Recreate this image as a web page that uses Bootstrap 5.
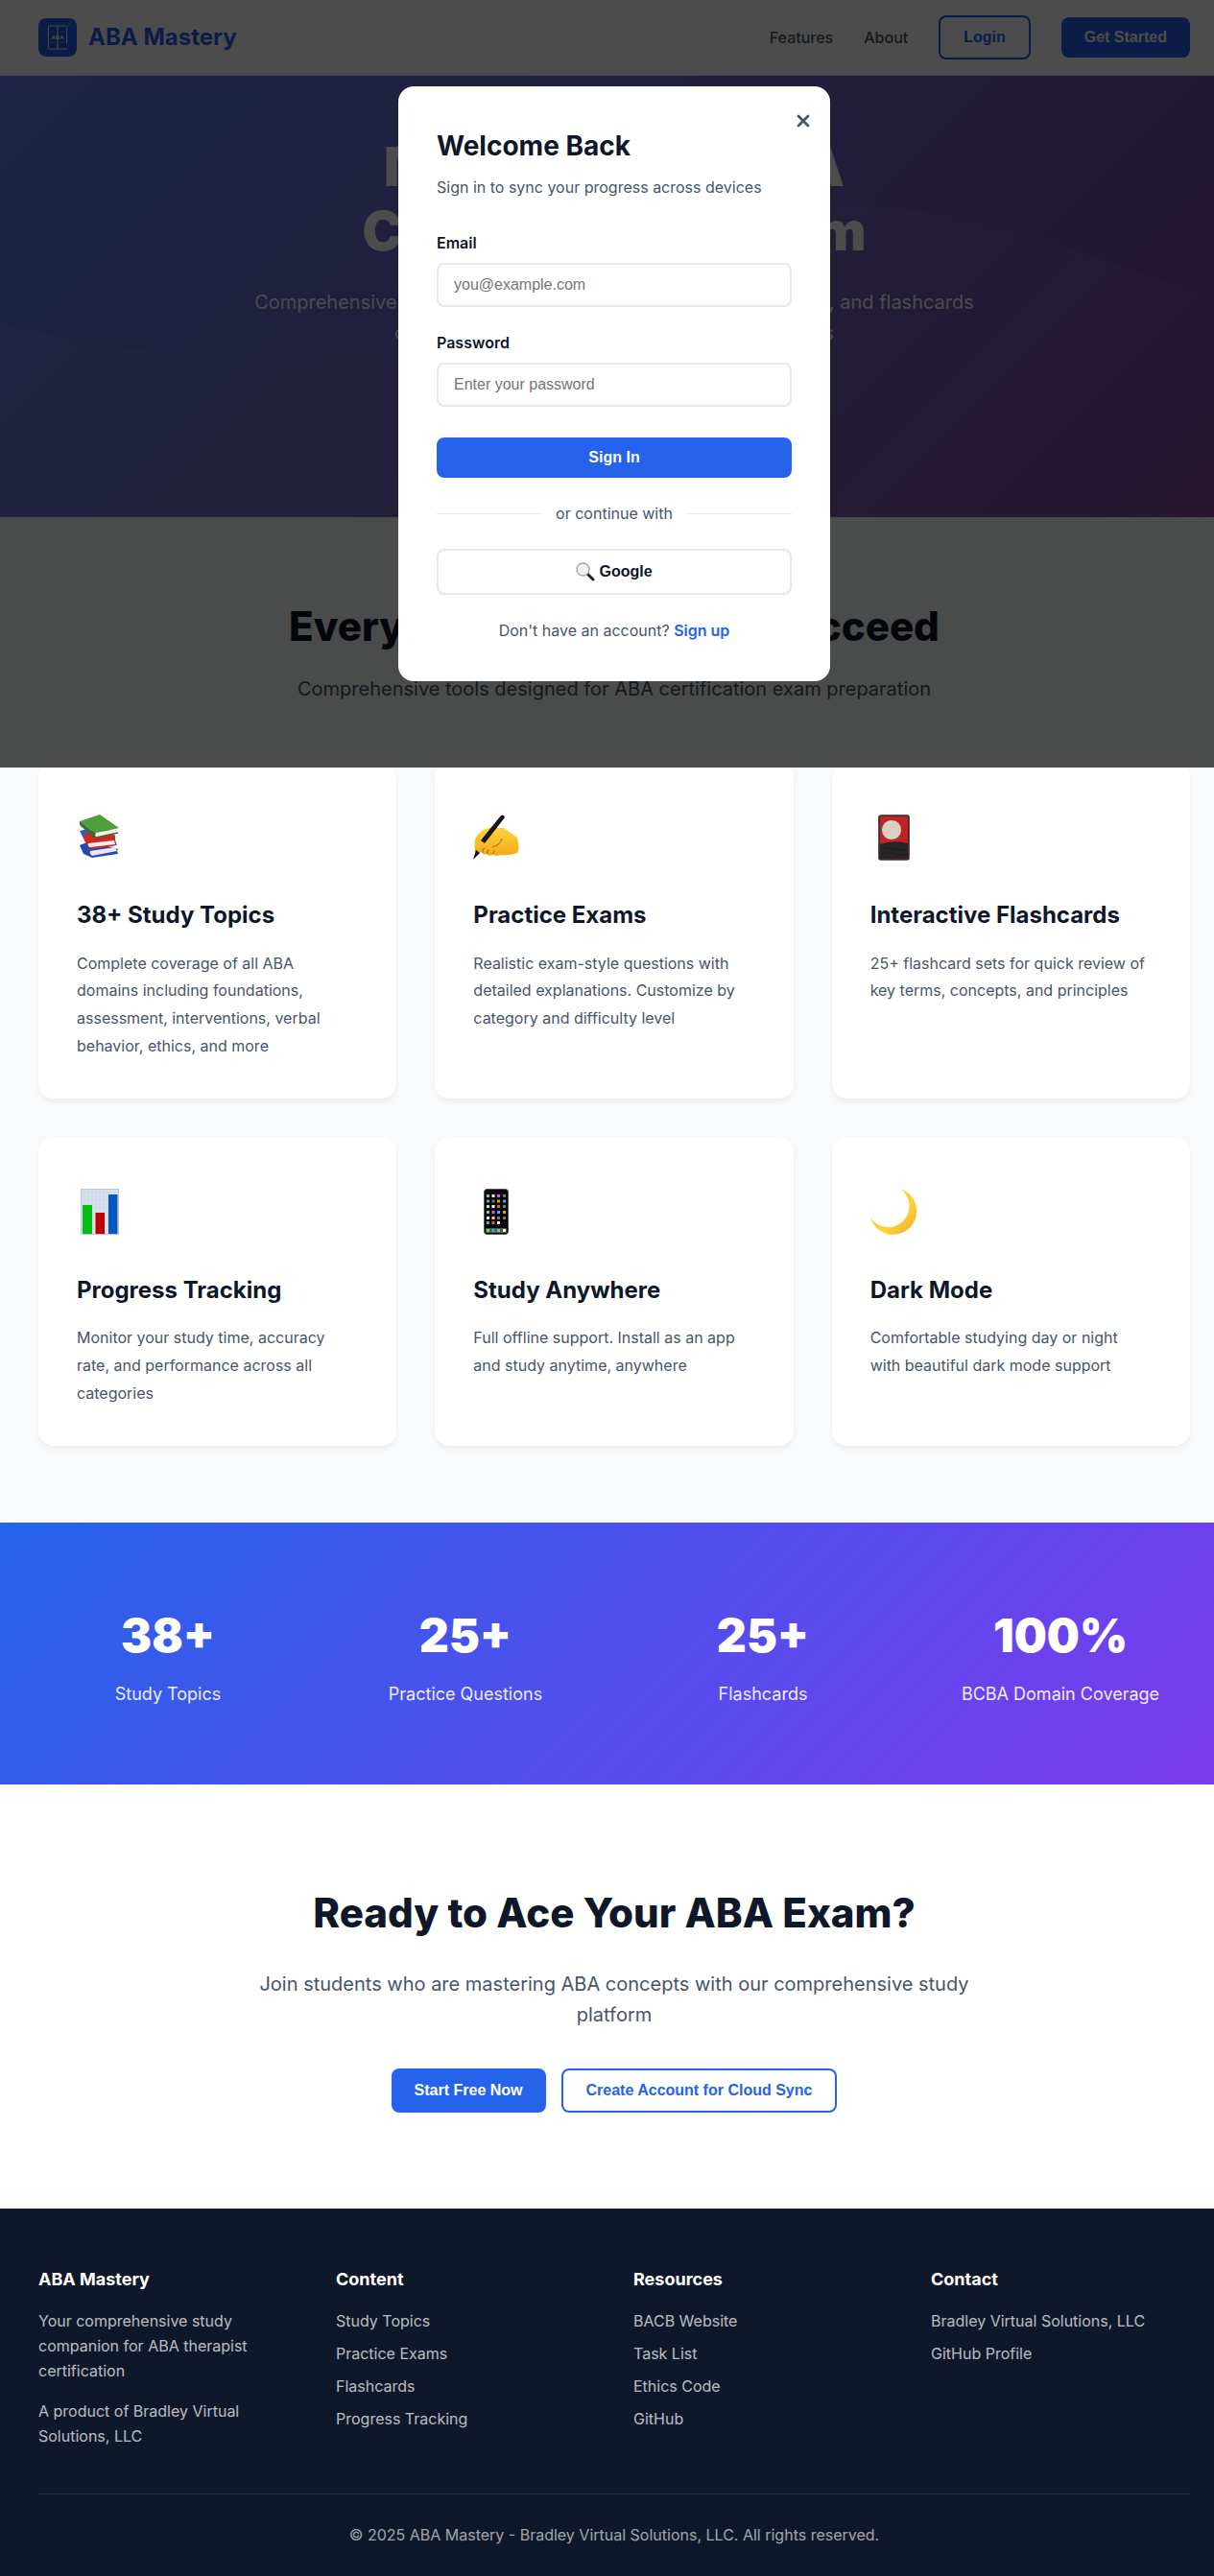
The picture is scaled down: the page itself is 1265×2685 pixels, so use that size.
<!DOCTYPE html>
<html lang="en">
<head>
<meta charset="utf-8">
<meta name="viewport" content="width=device-width, initial-scale=1">
<title>ABA Mastery</title>
<link href="https://cdn.jsdelivr.net/npm/bootstrap@5.3.0/dist/css/bootstrap.min.css" rel="stylesheet">
<style>
:root { --brand: #2563eb; --ink: #0f172a; --slate: #475569; --line: #e2e8f0; }
html { overflow-x: hidden; }
/* the page runs on under the scrollbar gutter */
body { margin-right: -15px; position: relative; font-family: Inter, "Liberation Sans", sans-serif; font-size: 16px; line-height: 26px; color: var(--ink); background: #fff; }
h1, h2, h3, h4, p, ul { margin: 0; }
a { text-decoration: none; }
.shell { max-width: 1280px; margin: 0 auto; padding: 0 40px; }
.narrow { max-width: 800px; }
.slate { color: var(--slate); }
.intro { font-size: 20px; line-height: 32px; }

.btn { font-family: "Liberation Sans", Arial, sans-serif; font-size: 16px; font-weight: 600; line-height: 18px; padding: 12px 24px; border: 0; border-radius: 8px; }
.btn-brand, .btn-brand:hover { background: var(--brand); color: #fff; }
.btn-line, .btn-line:hover { background: #fff; color: var(--brand); border: 2px solid var(--brand); }
.btn-plain, .btn-plain:hover { background: #fff; color: var(--ink); border: 2px solid var(--line); line-height: 20px; }

.site-head { border-bottom: 1px solid var(--line); background: #fff; }
.brand-name { font-size: 24px; font-weight: 700; color: var(--brand); }
.site-head nav a { color: var(--slate); font-weight: 500; }
.logo { width: 40px; height: 40px; }

.hero { position: relative; min-height: 460px; padding: 62px 0; color: #fff; background: linear-gradient(135deg, #667eea 0%, #764ba2 94%, #8b3f9c 100%); }
.hero .wave { position: absolute; left: 0; bottom: 0; width: 100%; height: 340px; }
.hero .narrow { position: relative; }
.hero h1 { font-size: 56px; font-weight: 900; line-height: 1.2; margin-bottom: 24px; }
.hero p { opacity: .95; }

.features { background: #f8fafc; padding: 80px 0; }
.title { font-size: 42px; font-weight: 800; line-height: 1.6; }
.tile { background: #fff; border-radius: 16px; padding: 40px; height: 100%; box-shadow: 0 4px 6px rgba(0, 0, 0, .05); }
.tile .pic { height: 77px; margin-bottom: 24px; }
.tile svg { width: 48px; height: 48px; }
.tile h3 { font-size: 24px; font-weight: 700; line-height: 1.6; margin-bottom: 16px; }
.tile p { line-height: 1.8; color: var(--slate); }
.wide-gap { --bs-gutter-x: 40px; --bs-gutter-y: 40px; }

.stats { background: linear-gradient(135deg, #2563eb, #7c3aed); color: #fff; padding: 80px 0; }
.stats .num { font-size: 48px; font-weight: 900; line-height: 1.6; margin-bottom: 8px; }
.stats .cap { font-size: 18px; line-height: 29px; opacity: .9; }

.cta { padding: 100px 0; }
.site-foot { background: #0f172a; color: #fff; padding: 60px 0 30px; }
.site-foot h4 { font-size: 18px; font-weight: 700; line-height: 28px; margin-bottom: 16px; }
.site-foot .dim, .site-foot a { color: #fff; opacity: .7; }
.site-foot li { margin-bottom: 8px; }
.legal { border-top: 1px solid rgba(255, 255, 255, .1); margin-top: 47px; padding-top: 29px; }
.legal p { opacity: .6; }

.shade { position: absolute; top: 0; left: 0; width: 100%; height: 800px; background: rgba(0, 0, 0, .7); z-index: 10; }
.login-box { position: relative; width: 450px; padding: 40px; background: #fff; border-radius: 16px; }
.login-box h2 { font-size: 28px; font-weight: 700; line-height: 1.6; margin-bottom: 8px; }
.login-box label { font-weight: 600; margin-bottom: 8px; }
.login-box .form-control { font-family: "Liberation Sans", Arial, sans-serif; font-size: 16px; line-height: 18px; padding: 12px 16px; border: 2px solid var(--line); border-radius: 8px; }
.login-box .form-control::placeholder { color: #757575; }
.signup { color: var(--brand); font-weight: 600; }
.close-x { position: absolute; top: 20px; right: 12px; width: 32px; height: 32px; padding: 0; border: 0; background: none; }
.rule { flex: 1; height: 1px; background: var(--line); }
</style>
</head>
<body>

<header class="site-head">
  <div class="shell d-flex justify-content-between align-items-center py-3">
    <a href="#" class="d-flex align-items-center brand-name">
      <svg class="logo me-2" viewBox="0 0 40 40" aria-hidden="true">
        <rect width="40" height="40" rx="8" fill="#2563eb"/>
        <rect x="10.5" y="8" width="19" height="24" rx="1" fill="#2159d6" stroke="#e8eefc" stroke-width="1"/>
        <path d="M20 8v24" stroke="#e8eefc" stroke-width="1.2"/>
        <path d="M13 14h5M22 14h5M13 25h5M22 25h5" stroke="#9db8f5" stroke-width=".6"/>
        <text x="20" y="21.500" text-anchor="middle" font-size="6" font-weight="700" fill="#fff" font-family="Liberation Sans, sans-serif">ABA</text>
        <path d="M29.500 26v5" stroke="#7c3aed"/>
        <path d="M27 8l2 2 4-5" fill="none" stroke="#10b981" stroke-width="1.6"/>
      </svg>
      <span class="ms-1">ABA Mastery</span>
    </a>
    <nav class="d-flex align-items-center column-gap-4">
      <a href="#features" class="me-2">Features</a>
      <a href="#about" class="me-2">About</a>
      <button type="button" class="btn btn-line me-2">Login</button>
      <button type="button" class="btn btn-brand">Get Started</button>
    </nav>
  </div>
</header>

<section class="hero text-center">
  <svg class="wave" viewBox="0 0 1280 340" preserveAspectRatio="none" aria-hidden="true">
    <path fill="#fff" fill-opacity=".04" d="M0 139C90 160 175 174 265 174C480 174 690 15 875 15C1010 15 1130 68 1280 117V340H0Z"/>
  </svg>
  <div class="narrow mx-auto">
    <h1>Master Your ABA Certification Exam</h1>
    <p class="intro">Comprehensive study materials, challenging practice questions, and flashcards designed for ABA therapists and RBT candidates</p>
  </div>
</section>

<section class="features" id="features">
  <div class="shell">
    <div class="text-center">
      <h2 class="title mb-3">Everything You Need to Succeed</h2>
      <p class="intro slate">Comprehensive tools designed for ABA certification exam preparation</p>
    </div>
    <div class="row wide-gap row-cols-3 pt-3 mt-1">
      <div class="col">
        <article class="tile">
          <div class="pic d-flex align-items-center">
            <svg viewBox="0 0 48 48" aria-hidden="true">
              <path d="M3 32l4 9 9 4 27-4-1-3 1-2-30-8z" fill="#2348b5"/>
              <path d="M14 38l26-4 2 4-26 5q-3-2-2-5z" fill="#e9e9ee"/>
              <path d="M3 17l6 12 9 6 24-3-3-8-28-9z" fill="#3059cf"/>
              <path d="M7 21l26-6 7 7v7l-2 4-24 3q-6-6-7-15z" fill="#d3261c"/>
              <path d="M12 30l27-3 1 4-26 3q-3-1-2-4z" fill="#f1f1f3"/>
              <path d="M3 7L24 0l20 14-24 6z" fill="#4d9f3b"/>
              <path d="M3 7l17 13v5L5 13q-3-3-2-6z" fill="#2f7427"/>
              <path d="M20 19l22-4 1 4-22 5q-3-2-1-5z" fill="#f1f1f3"/>
              <path d="M20 24l23-5" stroke="#2f7427" stroke-width="1.500"/>
            </svg>
          </div>
          <h3>38+ Study Topics</h3>
          <p>Complete coverage of all ABA domains including foundations, assessment, interventions, verbal behavior, ethics, and more</p>
        </article>
      </div>
      <div class="col">
        <article class="tile">
          <div class="pic d-flex align-items-center">
            <svg viewBox="0 0 48 48" aria-hidden="true">
              <defs><linearGradient id="skin" x1="0" y1="0" x2="0" y2="1"><stop offset="0" stop-color="#ffd23f"/><stop offset="1" stop-color="#f2a916"/></linearGradient></defs>
              <path d="M2 39Q0 24 6 20Q12 13 20 14L32 14Q38 18 46 24Q49 36 46 40Q38 43 28 42Q24 44 21 42Q17 44 14 41Q10 43 9 39Q5 41 2 39Z" fill="url(#skin)"/>
              <path d="M10 40q-1-5 3-5M15 41q-1-4 2-4M21 41q0-3 2-3M20 34q9-3 10-9" fill="none" stroke="#b8730c" stroke-width="1.200"/>
              <path d="M29 1q3-1 4 2L12 30 8 27z" fill="#161616"/>
              <path d="M3 37l4 3-7 7z" fill="#111"/>
            </svg>
          </div>
          <h3>Practice Exams</h3>
          <p>Realistic exam-style questions with detailed explanations. Customize by category and difficulty level</p>
        </article>
      </div>
      <div class="col">
        <article class="tile">
          <div class="pic d-flex align-items-center">
            <svg viewBox="0 0 48 48" aria-hidden="true">
              <rect x="9" y="1" width="31" height="46" rx="2" fill="#c22222" stroke="#2a2a2a" stroke-width="1.600"/>
              <path d="M10 31q14-5 29-1v16H10z" fill="#262626"/>
              <path d="M11 36q7-3 13 0t14 0M11 41q8-3 14 0t13-1" fill="none" stroke="#1a1a1a" stroke-width=".7"/>
              <circle cx="22" cy="16" r="10.500" fill="#ddd0c0" stroke="#7a3028" stroke-width=".8"/>
            </svg>
          </div>
          <h3>Interactive Flashcards</h3>
          <p>25+ flashcard sets for quick review of key terms, concepts, and principles</p>
        </article>
      </div>
      <div class="col">
        <article class="tile">
          <div class="pic d-flex align-items-center">
            <svg viewBox="0 0 48 48" aria-hidden="true">
              <rect x="4" y="0" width="40" height="48" fill="#d9e3ee"/>
              <path d="M4 4h40M4 8h40M4 12h40M4 16h40M4 20h40M4 24h40M4 28h40M4 32h40M4 36h40M4 40h40M8 0v48M12 0v48M16 0v48M20 0v48M24 0v48M28 0v48M32 0v48M36 0v48M40 0v48" stroke="#c6d2df" stroke-width=".5"/>
              <rect x="4.500" y=".5" width="39" height="47" fill="none" stroke="#bfc8d2"/>
              <rect x="6" y="17" width="10" height="30" fill="#04bd14"/>
              <rect x="19.500" y="25" width="9.500" height="22" fill="#c00000"/>
              <rect x="33" y="6" width="9.500" height="41" fill="#0457c0"/>
            </svg>
          </div>
          <h3>Progress Tracking</h3>
          <p>Monitor your study time, accuracy rate, and performance across all categories</p>
        </article>
      </div>
      <div class="col">
        <article class="tile">
          <div class="pic d-flex align-items-center">
            <svg viewBox="0 0 48 48" aria-hidden="true">
              <rect x="11.500" y=".5" width="25" height="47" rx="3" fill="#050505" stroke="#555"/>
              <rect x="13" y="41" width="22" height="5" rx="1" fill="#555"/>
              <g fill="#4be36a"><path d="M14 6h3v3h-3zM14 42h3v3h-3zM25 42h3v3h-3z"/></g>
              <g fill="#fff"><path d="M19.500 6h3v3h-3zM19.500 17h3v3h-3zM14 29h3v3h-3zM25 34h3v3h-3zM31 42h3v3h-3z"/></g>
              <g fill="#2fb4f5"><path d="M14 11.500h3v3h-3zM25 23h3v3h-3zM14 34h3v3h-3zM19.500 42h3v3h-3zM31 11.500h3v3h-3z"/></g>
              <g fill="#f6e24a"><path d="M14 17h3v3h-3zM19.500 29h3v3h-3z"/></g>
              <g fill="#ef5350"><path d="M25 17h3v3h-3zM19.500 34h3v3h-3z"/></g>
              <g fill="#e052e8"><path d="M25 6h3v3h-3zM19.500 23h3v3h-3z"/></g>
              <g fill="#ff9800"><path d="M31 23h3v3h-3zM25 11.500h3v3h-3z"/></g>
              <g fill="#777"><path d="M31 6h3v3h-3zM19.500 11.500h3v3h-3zM31 17h3v3h-3zM25 29h3v3h-3zM31 29h3v3h-3z"/></g>
              <path d="M14 23h3v3h-3z" fill="#45d6e6"/>
            </svg>
          </div>
          <h3>Study Anywhere</h3>
          <p>Full offline support. Install as an app and study anytime, anywhere</p>
        </article>
      </div>
      <div class="col">
        <article class="tile">
          <div class="pic d-flex align-items-center">
            <svg viewBox="0 0 48 48" aria-hidden="true">
              <defs><linearGradient id="moon" x1="0" y1="0" x2="1" y2="1"><stop offset="0" stop-color="#f0c63a"/><stop offset=".6" stop-color="#fbd33a"/><stop offset="1" stop-color="#e5ad25"/></linearGradient></defs>
              <path d="M31 0A24.500 24.500 0 1 1 0 30A22 22 0 1 0 31 0Z" fill="url(#moon)"/>
              <path d="M33 3A22 22 0 0 1 3 34" fill="none" stroke="#fff08a" stroke-width=".8" transform="translate(4 3)" opacity="0"/>
            </svg>
          </div>
          <h3>Dark Mode</h3>
          <p>Comfortable studying day or night with beautiful dark mode support</p>
        </article>
      </div>
    </div>
  </div>
</section>

<section class="stats text-center">
  <div class="shell">
    <div class="row wide-gap row-cols-4">
      <div class="col"><div class="num">38+</div><div class="cap">Study Topics</div></div>
      <div class="col"><div class="num">25+</div><div class="cap">Practice Questions</div></div>
      <div class="col"><div class="num">25+</div><div class="cap">Flashcards</div></div>
      <div class="col"><div class="num">100%</div><div class="cap">BCBA Domain Coverage</div></div>
    </div>
  </div>
</section>

<section class="cta text-center" id="about">
  <div class="narrow mx-auto">
    <h2 class="title mb-4">Ready to Ace Your ABA Exam?</h2>
    <p class="intro slate">Join students who are mastering ABA concepts with our comprehensive study platform</p>
    <div class="d-flex justify-content-center gap-3 pt-4 mt-3">
      <button type="button" class="btn btn-brand">Start Free Now</button>
      <button type="button" class="btn btn-line">Create Account for Cloud Sync</button>
    </div>
  </div>
</section>

<footer class="site-foot">
  <div class="shell">
    <div class="row wide-gap row-cols-4">
      <div class="col">
        <h4>ABA Mastery</h4>
        <p class="dim mb-3">Your comprehensive study companion for ABA therapist certification</p>
        <p class="dim">A product of Bradley Virtual Solutions, LLC</p>
      </div>
      <div class="col">
        <h4>Content</h4>
        <ul class="list-unstyled">
          <li><a href="#">Study Topics</a></li>
          <li><a href="#">Practice Exams</a></li>
          <li><a href="#">Flashcards</a></li>
          <li><a href="#">Progress Tracking</a></li>
        </ul>
      </div>
      <div class="col">
        <h4>Resources</h4>
        <ul class="list-unstyled">
          <li><a href="#">BACB Website</a></li>
          <li><a href="#">Task List</a></li>
          <li><a href="#">Ethics Code</a></li>
          <li><a href="#">GitHub</a></li>
        </ul>
      </div>
      <div class="col">
        <h4>Contact</h4>
        <ul class="list-unstyled">
          <li><a href="#">Bradley Virtual Solutions, LLC</a></li>
          <li><a href="#">GitHub Profile</a></li>
        </ul>
      </div>
    </div>
    <div class="legal text-center">
      <p>© 2025 ABA Mastery - Bradley Virtual Solutions, LLC. All rights reserved.</p>
    </div>
  </div>
</footer>

<div class="shade d-flex align-items-center justify-content-center" role="dialog" aria-labelledby="loginTitle">
  <form class="login-box">
    <button type="button" class="close-x d-flex align-items-center justify-content-center" aria-label="Close">
      <svg width="14" height="14" viewBox="0 0 14 14" aria-hidden="true"><path d="M2 2l10 10M12 2L2 12" stroke="#475569" stroke-width="2.800" stroke-linecap="round"/></svg>
    </button>
    <h2 id="loginTitle">Welcome Back</h2>
    <p class="slate pb-2 mb-4">Sign in to sync your progress across devices</p>
    <div class="mb-4">
      <label for="email" class="d-block">Email</label>
      <input type="email" id="email" class="form-control" placeholder="you@example.com">
    </div>
    <div class="pb-2 mb-4">
      <label for="password" class="d-block">Password</label>
      <input type="password" id="password" class="form-control" placeholder="Enter your password">
    </div>
    <button type="submit" class="btn btn-brand w-100 d-block">Sign In</button>
    <div class="d-flex align-items-center gap-3 my-4">
      <span class="rule"></span><span class="slate">or continue with</span><span class="rule"></span>
    </div>
    <button type="button" class="btn btn-plain w-100 d-flex align-items-center justify-content-center gap-1">
      <svg width="20" height="20" viewBox="0 0 20 20" aria-hidden="true">
        <path d="M12 12l6 6" stroke="#222" stroke-width="3" stroke-linecap="round"/>
        <circle cx="7.500" cy="7.500" r="6.500" fill="#eef1f4" stroke="#9aa3ad" stroke-width="1.300"/>
        <path d="M4 6q1-2.500 4-2.500" stroke="#fff" stroke-width="1.500" fill="none"/>
      </svg>
      Google
    </button>
    <p class="slate text-center mt-4">Don't have an account? <a href="#" class="signup">Sign up</a></p>
  </form>
</div>
<script src="https://cdn.jsdelivr.net/npm/bootstrap@5.3.0/dist/js/bootstrap.bundle.min.js"></script>
</body>
</html>
